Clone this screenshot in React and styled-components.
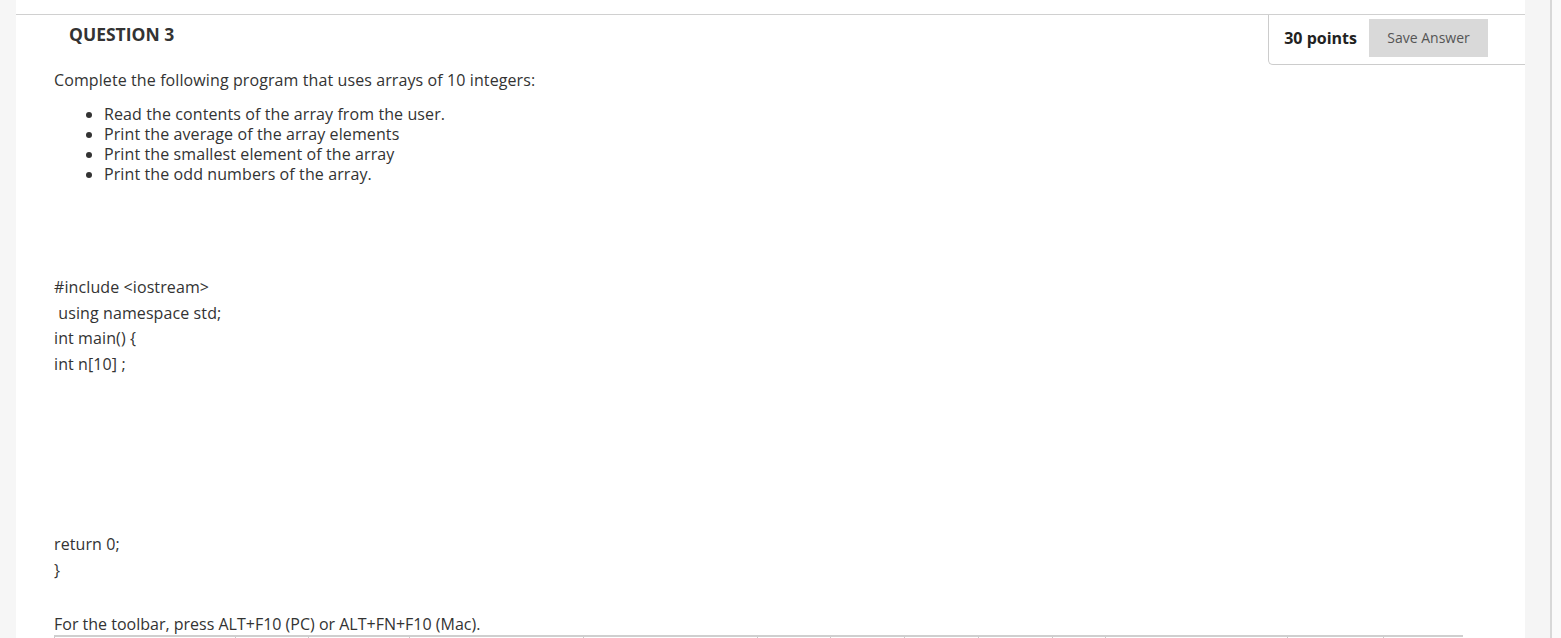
import React from "react";
import styled, { createGlobalStyle } from "styled-components";

const Global = createGlobalStyle`
  html, body { margin: 0; padding: 0; overflow: hidden; background: #f6f6f6; }
  body { font-family: "Open Sans", "Liberation Sans", sans-serif; color: #333; }
`;

const Page = styled.div`
  display: flex;
  width: 1561px;
  height: 638px;
  overflow: hidden;
`;

const LeftGutter = styled.div`
  width: 16px;
  flex: none;
  background: #f6f6f6;
`;

const Main = styled.div`
  width: 1509px;
  flex: none;
  background: #fff;
  padding-top: 14px;
  box-sizing: border-box;
`;

const RightGutter = styled.div`
  flex: 1;
  display: flex;
  background: #f6f6f6;
`;

const GutterSpace = styled.div`
  width: 25px;
  background: #f5f5f5;
`;

const ScrollLine = styled.div`
  width: 2px;
  background: #d8d8d8;
`;

const GutterEnd = styled.div`
  flex: 1;
  background: #fafafa;
`;

const Header = styled.div`
  display: flex;
  justify-content: space-between;
  align-items: flex-start;
  border-top: 1px solid #d0d0d0;
  height: 51px;
`;

const Title = styled.h2`
  margin: 0;
  padding: 8px 0 0 53px;
  font-size: 17.5px;
  font-weight: 700;
  line-height: 22px;
  color: #333;
`;

const PointsBox = styled.div`
  display: flex;
  align-items: center;
  gap: 12px;
  height: 50px;
  box-sizing: border-box;
  padding: 4px 37px 8px 15px;
  border-left: 1px solid #ccc;
  border-bottom: 1px solid #ccc;
  border-bottom-left-radius: 5px;
`;

const Points = styled.span`
  font-size: 16px;
  font-weight: 700;
  color: #222;
`;

const SaveButton = styled.button`
  height: 38px;
  width: 119px;
  border: none;
  background: #d9d9d9;
  color: #555;
  font-family: "Open Sans", "Liberation Sans", sans-serif;
  font-size: 14px;
  padding: 0;
`;

const Content = styled.div`
  padding: 2px 0 0 38px;
  font-size: 16px;
  letter-spacing: 0.1px;
`;

const Para = styled.p`
  margin: 0;
  line-height: 24px;
`;

const List = styled.ul`
  margin: 12px 0 0 0;
  padding-left: 50px;
  line-height: 20px;
`;

const CodeBlock = styled.div`
  margin-top: ${(p) => p.$gap}px;
  line-height: 25.6px;
`;

const CodeLine = styled.div`
  white-space: pre;
`;

const Hint = styled.p`
  margin: 30px 0 0 0;
  line-height: 21px;
  letter-spacing: 0;
`;

const Toolbar = styled.div`
  display: flex;
  width: 1409px;
  height: 6px;
  border-top: 2px solid #cfcfcf;
`;

const ToolCell = styled.div`
  height: 4px;
  border-left: 1px solid #c8c8c8;
  box-sizing: border-box;
`;

const edges = [54, 235, 308, 409, 583, 757, 830, 904, 978, 1052, 1105, 1287, 1383, 1463];

export default function App() {
  const widths = edges.slice(1).map((e, i) => e - edges[i]);
  return (
    <>
      <Global />
      <Page>
        <LeftGutter />
        <Main>
          <Header>
            <Title>QUESTION 3</Title>
            <PointsBox>
              <Points>30 points</Points>
              <SaveButton>Save Answer</SaveButton>
            </PointsBox>
          </Header>
          <Content>
            <Para>Complete the following program that uses arrays of 10 integers:</Para>
            <List>
              <li>Read the contents of the array from the user.</li>
              <li>Print the average of the array elements</li>
              <li>Print the smallest element of the array</li>
              <li>Print the odd numbers of the array.</li>
            </List>
            <CodeBlock $gap={91}>
              <CodeLine>#include &lt;iostream&gt;</CodeLine>
              <CodeLine> using namespace std;</CodeLine>
              <CodeLine>int main() {"{"}</CodeLine>
              <CodeLine>int n[10] ;</CodeLine>
            </CodeBlock>
            <CodeBlock $gap={155}>
              <CodeLine>return 0;</CodeLine>
              <CodeLine>{"}"}</CodeLine>
            </CodeBlock>
            <Hint>For the toolbar, press ALT+F10 (PC) or ALT+FN+F10 (Mac).</Hint>
            <Toolbar>
              {widths.map((w, i) => (
                <ToolCell key={i} style={{ width: w }} />
              ))}
            </Toolbar>
          </Content>
        </Main>
        <RightGutter>
          <GutterSpace />
          <ScrollLine />
          <GutterEnd />
        </RightGutter>
      </Page>
    </>
  );
}
